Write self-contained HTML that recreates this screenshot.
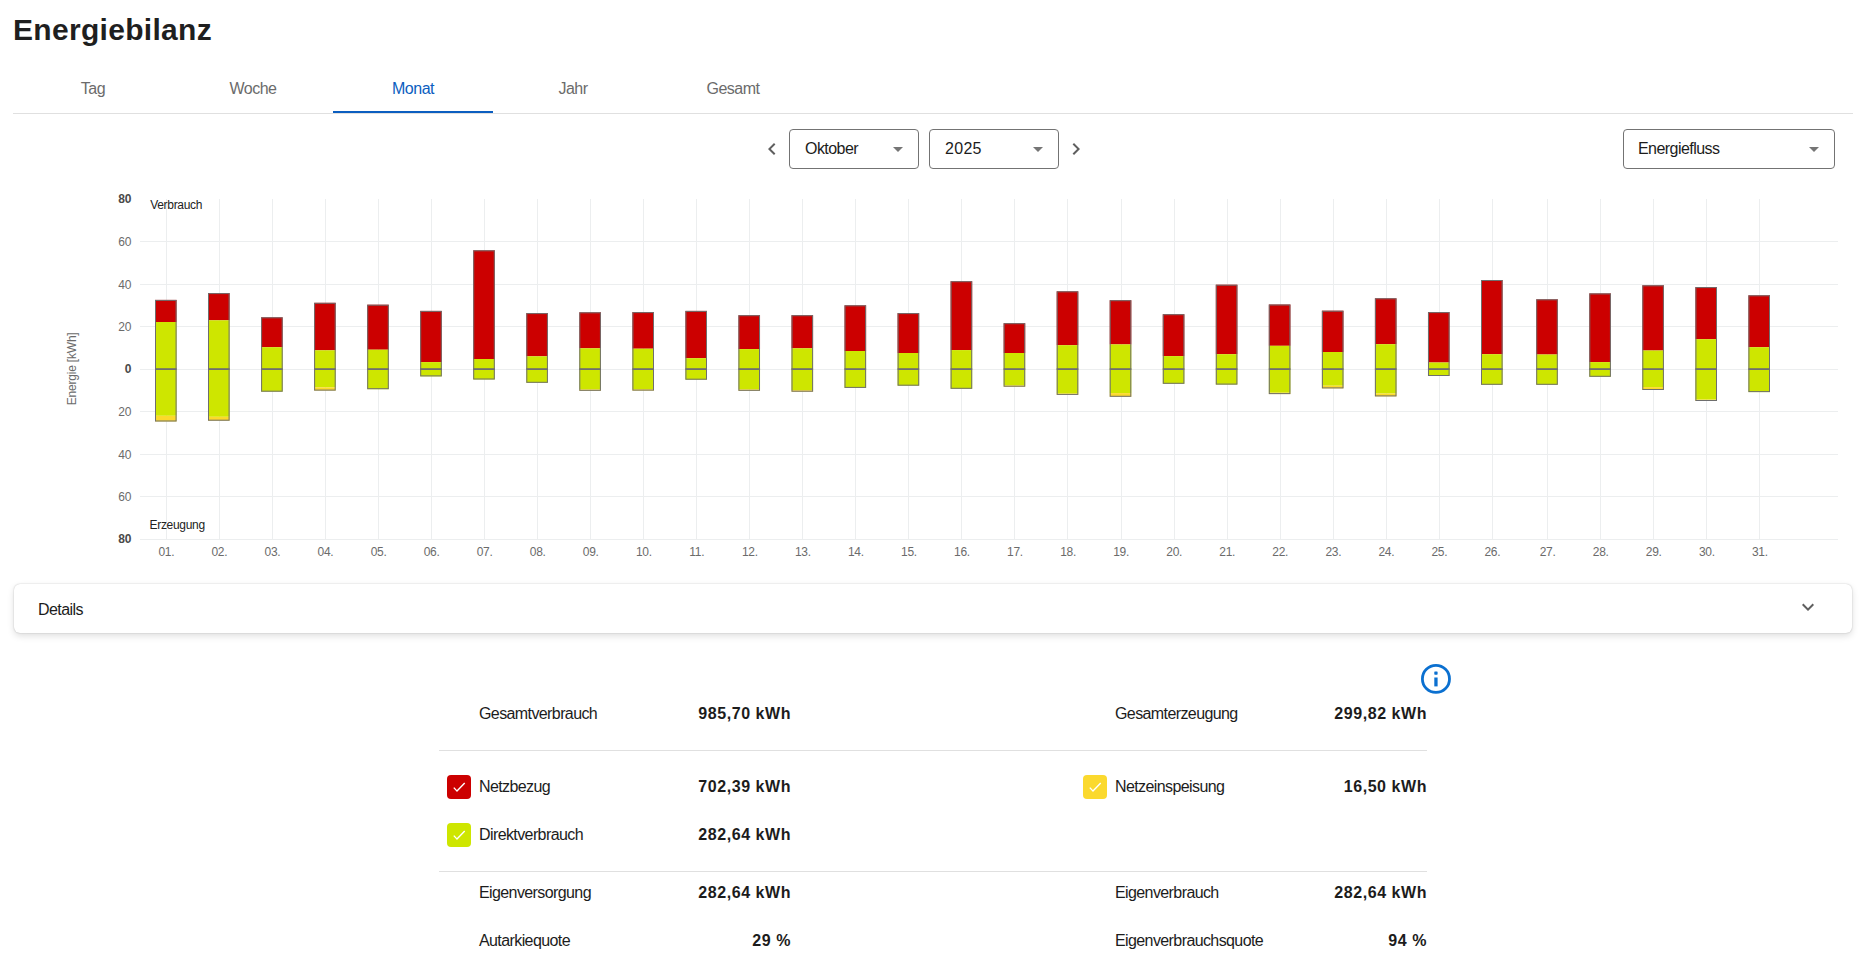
<!DOCTYPE html>
<html lang="de">
<head>
<meta charset="utf-8">
<title>Energiebilanz</title>
<style>
html,body{margin:0;padding:0;background:#fff;}
body{width:1866px;height:978px;position:relative;overflow:hidden;font-family:"Liberation Sans",sans-serif;color:#1c1c1c;}
.a{position:absolute;white-space:nowrap;line-height:1;}
.t16{font-size:16px;letter-spacing:-0.55px;}
.tab{position:absolute;top:81px;width:160px;text-align:center;font-size:16px;line-height:1;color:#6b6b6b;letter-spacing:-0.5px;}
.sel{position:absolute;top:129px;height:40px;box-sizing:border-box;border:1px solid #737373;border-radius:4px;background:#fff;}
.tri{position:absolute;width:0;height:0;border-left:5px solid transparent;border-right:5px solid transparent;border-top:5px solid #757575;}
.lbl{font-size:16px;letter-spacing:-0.6px;color:#1c1c1c;}
.val{font-size:16px;font-weight:bold;letter-spacing:0.55px;color:#1c1c1c;text-align:right;}
.cb{position:absolute;width:24px;height:24px;border-radius:4px;}
.cb svg{position:absolute;left:0;top:0;}
.hr{position:absolute;left:439px;width:988px;height:1px;background:#e0e0e0;}
</style>
</head>
<body>
<div class="a" style="left:13px;top:14.5px;font-size:30px;font-weight:bold;color:#1f1f1f;letter-spacing:0.3px;">Energiebilanz</div>

<div class="tab" style="left:13px;">Tag</div>
<div class="tab" style="left:173px;">Woche</div>
<div class="tab" style="left:333px;color:#0b5ec0;">Monat</div>
<div class="tab" style="left:493px;">Jahr</div>
<div class="tab" style="left:653px;">Gesamt</div>
<div class="a" style="left:13px;top:113px;width:1840px;height:1px;background:#e0e0e0;"></div>
<div class="a" style="left:333px;top:111px;width:160px;height:2px;background:#0b5ec0;"></div>

<svg class="a" style="left:760px;top:137px;" width="24" height="24" viewBox="0 0 24 24"><path d="M15.41 7.41L14 6l-6 6 6 6 1.41-1.41L10.83 12z" fill="#5f5f5f"/></svg>
<div class="sel" style="left:789px;width:130px;"></div>
<div class="a t16" style="left:805px;top:141.4px;">Oktober</div>
<div class="tri" style="left:893px;top:147px;"></div>
<div class="sel" style="left:929px;width:130px;"></div>
<div class="a t16" style="left:945px;top:141.4px;letter-spacing:0.3px;">2025</div>
<div class="tri" style="left:1033px;top:147px;"></div>
<svg class="a" style="left:1064px;top:137px;" width="24" height="24" viewBox="0 0 24 24"><path d="M10 6L8.59 7.41 13.17 12l-4.58 4.59L10 18l6-6z" fill="#5f5f5f"/></svg>
<div class="sel" style="left:1623px;width:212px;"></div>
<div class="a t16" style="left:1638px;top:141.4px;">Energiefluss</div>
<div class="tri" style="left:1809px;top:147px;"></div>

<svg class="a" style="left:0;top:0;" width="1866" height="600" viewBox="0 0 1866 600">
<rect x="140" y="241" width="1698" height="1" fill="#eceeef"/>
<rect x="140" y="284" width="1698" height="1" fill="#eceeef"/>
<rect x="140" y="326" width="1698" height="1" fill="#eceeef"/>
<rect x="140" y="369" width="1698" height="1" fill="#eceeef"/>
<rect x="140" y="411" width="1698" height="1" fill="#eceeef"/>
<rect x="140" y="454" width="1698" height="1" fill="#eceeef"/>
<rect x="140" y="496" width="1698" height="1" fill="#eceeef"/>
<rect x="140" y="539" width="1698" height="1" fill="#eceeef"/>
<rect x="166" y="199" width="1" height="340" fill="#eceeef"/>
<rect x="219" y="199" width="1" height="340" fill="#eceeef"/>
<rect x="272" y="199" width="1" height="340" fill="#eceeef"/>
<rect x="325" y="199" width="1" height="340" fill="#eceeef"/>
<rect x="378" y="199" width="1" height="340" fill="#eceeef"/>
<rect x="431" y="199" width="1" height="340" fill="#eceeef"/>
<rect x="484" y="199" width="1" height="340" fill="#eceeef"/>
<rect x="537" y="199" width="1" height="340" fill="#eceeef"/>
<rect x="590" y="199" width="1" height="340" fill="#eceeef"/>
<rect x="643" y="199" width="1" height="340" fill="#eceeef"/>
<rect x="696" y="199" width="1" height="340" fill="#eceeef"/>
<rect x="749" y="199" width="1" height="340" fill="#eceeef"/>
<rect x="802" y="199" width="1" height="340" fill="#eceeef"/>
<rect x="855" y="199" width="1" height="340" fill="#eceeef"/>
<rect x="908" y="199" width="1" height="340" fill="#eceeef"/>
<rect x="961" y="199" width="1" height="340" fill="#eceeef"/>
<rect x="1014" y="199" width="1" height="340" fill="#eceeef"/>
<rect x="1067" y="199" width="1" height="340" fill="#eceeef"/>
<rect x="1121" y="199" width="1" height="340" fill="#eceeef"/>
<rect x="1174" y="199" width="1" height="340" fill="#eceeef"/>
<rect x="1227" y="199" width="1" height="340" fill="#eceeef"/>
<rect x="1280" y="199" width="1" height="340" fill="#eceeef"/>
<rect x="1333" y="199" width="1" height="340" fill="#eceeef"/>
<rect x="1386" y="199" width="1" height="340" fill="#eceeef"/>
<rect x="1439" y="199" width="1" height="340" fill="#eceeef"/>
<rect x="1492" y="199" width="1" height="340" fill="#eceeef"/>
<rect x="1547" y="199" width="1" height="340" fill="#eceeef"/>
<rect x="1600" y="199" width="1" height="340" fill="#eceeef"/>
<rect x="1653" y="199" width="1" height="340" fill="#eceeef"/>
<rect x="1706" y="199" width="1" height="340" fill="#eceeef"/>
<rect x="1759" y="199" width="1" height="340" fill="#eceeef"/>
<rect x="155.0" y="299.9" width="21.6" height="22.1" fill="#cc0000"/>
<rect x="155.0" y="322.0" width="21.6" height="93.8" fill="#cee600"/>
<rect x="155.0" y="415.8" width="21.6" height="5.7" fill="#fcd92b"/>
<rect x="155.5" y="300.4" width="20.6" height="120.6" fill="none" stroke="#6e6e6e" stroke-width="1"/>
<rect x="155.0" y="368.2" width="21.6" height="1.8" fill="#6e6e6e"/>
<rect x="208.04" y="293.1" width="21.6" height="27.2" fill="#cc0000"/>
<rect x="208.04" y="320.3" width="21.6" height="96.5" fill="#cee600"/>
<rect x="208.04" y="416.8" width="21.6" height="3.9" fill="#fcd92b"/>
<rect x="208.5" y="293.6" width="20.6" height="126.6" fill="none" stroke="#6e6e6e" stroke-width="1"/>
<rect x="208.04" y="368.2" width="21.6" height="1.8" fill="#6e6e6e"/>
<rect x="261.08" y="317.3" width="21.6" height="29.9" fill="#cc0000"/>
<rect x="261.08" y="347.2" width="21.6" height="44.5" fill="#cee600"/>
<rect x="261.6" y="317.8" width="20.6" height="73.4" fill="none" stroke="#6e6e6e" stroke-width="1"/>
<rect x="261.08" y="368.2" width="21.6" height="1.8" fill="#6e6e6e"/>
<rect x="314.12" y="302.8" width="21.6" height="47.5" fill="#cc0000"/>
<rect x="314.12" y="350.3" width="21.6" height="37.0" fill="#cee600"/>
<rect x="314.12" y="387.3" width="21.6" height="3.3" fill="#fcd92b"/>
<rect x="314.6" y="303.3" width="20.6" height="86.8" fill="none" stroke="#6e6e6e" stroke-width="1"/>
<rect x="314.12" y="368.2" width="21.6" height="1.8" fill="#6e6e6e"/>
<rect x="367.16" y="304.7" width="21.6" height="45.0" fill="#cc0000"/>
<rect x="367.16" y="349.7" width="21.6" height="39.5" fill="#cee600"/>
<rect x="367.7" y="305.2" width="20.6" height="83.5" fill="none" stroke="#6e6e6e" stroke-width="1"/>
<rect x="367.16" y="368.2" width="21.6" height="1.8" fill="#6e6e6e"/>
<rect x="420.2" y="310.9" width="21.6" height="51.2" fill="#cc0000"/>
<rect x="420.2" y="362.1" width="21.6" height="14.3" fill="#cee600"/>
<rect x="420.7" y="311.4" width="20.6" height="64.5" fill="none" stroke="#6e6e6e" stroke-width="1"/>
<rect x="420.2" y="368.2" width="21.6" height="1.8" fill="#6e6e6e"/>
<rect x="473.24" y="250.3" width="21.6" height="108.7" fill="#cc0000"/>
<rect x="473.24" y="359.0" width="21.6" height="20.5" fill="#cee600"/>
<rect x="473.7" y="250.8" width="20.6" height="128.2" fill="none" stroke="#6e6e6e" stroke-width="1"/>
<rect x="473.24" y="368.2" width="21.6" height="1.8" fill="#6e6e6e"/>
<rect x="526.28" y="313.1" width="21.6" height="43.2" fill="#cc0000"/>
<rect x="526.28" y="356.3" width="21.6" height="26.5" fill="#cee600"/>
<rect x="526.8" y="313.6" width="20.6" height="68.7" fill="none" stroke="#6e6e6e" stroke-width="1"/>
<rect x="526.28" y="368.2" width="21.6" height="1.8" fill="#6e6e6e"/>
<rect x="579.32" y="312.3" width="21.6" height="36.0" fill="#cc0000"/>
<rect x="579.32" y="348.3" width="21.6" height="41.1" fill="#cee600"/>
<rect x="579.32" y="389.4" width="21.6" height="1.4" fill="#fcd92b"/>
<rect x="579.8" y="312.8" width="20.6" height="77.5" fill="none" stroke="#6e6e6e" stroke-width="1"/>
<rect x="579.32" y="368.2" width="21.6" height="1.8" fill="#6e6e6e"/>
<rect x="632.36" y="312.1" width="21.6" height="36.6" fill="#cc0000"/>
<rect x="632.36" y="348.7" width="21.6" height="40.5" fill="#cee600"/>
<rect x="632.36" y="389.2" width="21.6" height="1.4" fill="#fcd92b"/>
<rect x="632.9" y="312.6" width="20.6" height="77.5" fill="none" stroke="#6e6e6e" stroke-width="1"/>
<rect x="632.36" y="368.2" width="21.6" height="1.8" fill="#6e6e6e"/>
<rect x="685.4" y="310.9" width="21.6" height="47.3" fill="#cc0000"/>
<rect x="685.4" y="358.2" width="21.6" height="21.5" fill="#cee600"/>
<rect x="685.9" y="311.4" width="20.6" height="67.8" fill="none" stroke="#6e6e6e" stroke-width="1"/>
<rect x="685.4" y="368.2" width="21.6" height="1.8" fill="#6e6e6e"/>
<rect x="738.44" y="315.2" width="21.6" height="33.9" fill="#cc0000"/>
<rect x="738.44" y="349.1" width="21.6" height="40.3" fill="#cee600"/>
<rect x="738.44" y="389.4" width="21.6" height="1.4" fill="#fcd92b"/>
<rect x="738.9" y="315.7" width="20.6" height="74.6" fill="none" stroke="#6e6e6e" stroke-width="1"/>
<rect x="738.44" y="368.2" width="21.6" height="1.8" fill="#6e6e6e"/>
<rect x="791.48" y="315.2" width="21.6" height="33.1" fill="#cc0000"/>
<rect x="791.48" y="348.3" width="21.6" height="42.0" fill="#cee600"/>
<rect x="791.48" y="390.3" width="21.6" height="1.4" fill="#fcd92b"/>
<rect x="792.0" y="315.7" width="20.6" height="75.5" fill="none" stroke="#6e6e6e" stroke-width="1"/>
<rect x="791.48" y="368.2" width="21.6" height="1.8" fill="#6e6e6e"/>
<rect x="844.52" y="305.3" width="21.6" height="45.7" fill="#cc0000"/>
<rect x="844.52" y="351.0" width="21.6" height="36.9" fill="#cee600"/>
<rect x="845.0" y="305.8" width="20.6" height="81.6" fill="none" stroke="#6e6e6e" stroke-width="1"/>
<rect x="844.52" y="368.2" width="21.6" height="1.8" fill="#6e6e6e"/>
<rect x="897.56" y="313.1" width="21.6" height="39.9" fill="#cc0000"/>
<rect x="897.56" y="353.0" width="21.6" height="32.7" fill="#cee600"/>
<rect x="898.1" y="313.6" width="20.6" height="71.6" fill="none" stroke="#6e6e6e" stroke-width="1"/>
<rect x="897.56" y="368.2" width="21.6" height="1.8" fill="#6e6e6e"/>
<rect x="950.6" y="281.2" width="21.6" height="68.9" fill="#cc0000"/>
<rect x="950.6" y="350.1" width="21.6" height="38.7" fill="#cee600"/>
<rect x="951.1" y="281.7" width="20.6" height="106.6" fill="none" stroke="#6e6e6e" stroke-width="1"/>
<rect x="950.6" y="368.2" width="21.6" height="1.8" fill="#6e6e6e"/>
<rect x="1003.64" y="323.2" width="21.6" height="29.8" fill="#cc0000"/>
<rect x="1003.64" y="353.0" width="21.6" height="32.5" fill="#cee600"/>
<rect x="1003.64" y="385.5" width="21.6" height="1.2" fill="#fcd92b"/>
<rect x="1004.1" y="323.7" width="20.6" height="62.5" fill="none" stroke="#6e6e6e" stroke-width="1"/>
<rect x="1003.64" y="368.2" width="21.6" height="1.8" fill="#6e6e6e"/>
<rect x="1056.68" y="291.3" width="21.6" height="53.9" fill="#cc0000"/>
<rect x="1056.68" y="345.2" width="21.6" height="48.4" fill="#cee600"/>
<rect x="1056.68" y="393.6" width="21.6" height="1.3" fill="#fcd92b"/>
<rect x="1057.2" y="291.8" width="20.6" height="102.6" fill="none" stroke="#6e6e6e" stroke-width="1"/>
<rect x="1056.68" y="368.2" width="21.6" height="1.8" fill="#6e6e6e"/>
<rect x="1109.72" y="300.2" width="21.6" height="44.2" fill="#cc0000"/>
<rect x="1109.72" y="344.40000000000003" width="21.6" height="48.7" fill="#cee600"/>
<rect x="1109.72" y="393.1" width="21.6" height="3.7" fill="#fcd92b"/>
<rect x="1110.2" y="300.7" width="20.6" height="95.6" fill="none" stroke="#6e6e6e" stroke-width="1"/>
<rect x="1109.72" y="368.2" width="21.6" height="1.8" fill="#6e6e6e"/>
<rect x="1162.76" y="314.2" width="21.6" height="41.9" fill="#cc0000"/>
<rect x="1162.76" y="356.1" width="21.6" height="27.7" fill="#cee600"/>
<rect x="1163.3" y="314.7" width="20.6" height="68.6" fill="none" stroke="#6e6e6e" stroke-width="1"/>
<rect x="1162.76" y="368.2" width="21.6" height="1.8" fill="#6e6e6e"/>
<rect x="1215.8" y="284.7" width="21.6" height="69.5" fill="#cc0000"/>
<rect x="1215.8" y="354.2" width="21.6" height="30.4" fill="#cee600"/>
<rect x="1216.3" y="285.2" width="20.6" height="98.9" fill="none" stroke="#6e6e6e" stroke-width="1"/>
<rect x="1215.8" y="368.2" width="21.6" height="1.8" fill="#6e6e6e"/>
<rect x="1268.84" y="304.5" width="21.6" height="41.3" fill="#cc0000"/>
<rect x="1268.84" y="345.8" width="21.6" height="46.9" fill="#cee600"/>
<rect x="1268.84" y="392.7" width="21.6" height="1.4" fill="#fcd92b"/>
<rect x="1269.3" y="305.0" width="20.6" height="88.6" fill="none" stroke="#6e6e6e" stroke-width="1"/>
<rect x="1268.84" y="368.2" width="21.6" height="1.8" fill="#6e6e6e"/>
<rect x="1321.88" y="310.7" width="21.6" height="41.3" fill="#cc0000"/>
<rect x="1321.88" y="352.0" width="21.6" height="33.7" fill="#cee600"/>
<rect x="1321.88" y="385.7" width="21.6" height="2.7" fill="#fcd92b"/>
<rect x="1322.4" y="311.2" width="20.6" height="76.7" fill="none" stroke="#6e6e6e" stroke-width="1"/>
<rect x="1321.88" y="368.2" width="21.6" height="1.8" fill="#6e6e6e"/>
<rect x="1374.92" y="298.3" width="21.6" height="45.9" fill="#cc0000"/>
<rect x="1374.92" y="344.2" width="21.6" height="49.3" fill="#cee600"/>
<rect x="1374.92" y="393.5" width="21.6" height="2.9" fill="#fcd92b"/>
<rect x="1375.4" y="298.8" width="20.6" height="97.1" fill="none" stroke="#6e6e6e" stroke-width="1"/>
<rect x="1374.92" y="368.2" width="21.6" height="1.8" fill="#6e6e6e"/>
<rect x="1427.96" y="312.1" width="21.6" height="50.4" fill="#cc0000"/>
<rect x="1427.96" y="362.5" width="21.6" height="13.5" fill="#cee600"/>
<rect x="1428.5" y="312.6" width="20.6" height="62.9" fill="none" stroke="#6e6e6e" stroke-width="1"/>
<rect x="1427.96" y="368.2" width="21.6" height="1.8" fill="#6e6e6e"/>
<rect x="1481.0" y="280.0" width="21.6" height="74.2" fill="#cc0000"/>
<rect x="1481.0" y="354.2" width="21.6" height="30.6" fill="#cee600"/>
<rect x="1481.5" y="280.5" width="20.6" height="103.8" fill="none" stroke="#6e6e6e" stroke-width="1"/>
<rect x="1481.0" y="368.2" width="21.6" height="1.8" fill="#6e6e6e"/>
<rect x="1536.24" y="299.3" width="21.6" height="55.2" fill="#cc0000"/>
<rect x="1536.24" y="354.5" width="21.6" height="30.3" fill="#cee600"/>
<rect x="1536.7" y="299.8" width="20.6" height="84.5" fill="none" stroke="#6e6e6e" stroke-width="1"/>
<rect x="1536.24" y="368.2" width="21.6" height="1.8" fill="#6e6e6e"/>
<rect x="1589.28" y="293.4" width="21.6" height="68.7" fill="#cc0000"/>
<rect x="1589.28" y="362.1" width="21.6" height="14.7" fill="#cee600"/>
<rect x="1589.8" y="293.9" width="20.6" height="82.4" fill="none" stroke="#6e6e6e" stroke-width="1"/>
<rect x="1589.28" y="368.2" width="21.6" height="1.8" fill="#6e6e6e"/>
<rect x="1642.32" y="285.3" width="21.6" height="65.2" fill="#cc0000"/>
<rect x="1642.32" y="350.5" width="21.6" height="36.6" fill="#cee600"/>
<rect x="1642.32" y="387.1" width="21.6" height="2.9" fill="#fcd92b"/>
<rect x="1642.8" y="285.8" width="20.6" height="103.7" fill="none" stroke="#6e6e6e" stroke-width="1"/>
<rect x="1642.32" y="368.2" width="21.6" height="1.8" fill="#6e6e6e"/>
<rect x="1695.36" y="287.1" width="21.6" height="52.1" fill="#cc0000"/>
<rect x="1695.36" y="339.2" width="21.6" height="60.4" fill="#cee600"/>
<rect x="1695.36" y="399.6" width="21.6" height="1.4" fill="#fcd92b"/>
<rect x="1695.9" y="287.6" width="20.6" height="112.9" fill="none" stroke="#6e6e6e" stroke-width="1"/>
<rect x="1695.36" y="368.2" width="21.6" height="1.8" fill="#6e6e6e"/>
<rect x="1748.4" y="295.3" width="21.6" height="51.9" fill="#cc0000"/>
<rect x="1748.4" y="347.2" width="21.6" height="44.9" fill="#cee600"/>
<rect x="1748.9" y="295.8" width="20.6" height="95.8" fill="none" stroke="#6e6e6e" stroke-width="1"/>
<rect x="1748.4" y="368.2" width="21.6" height="1.8" fill="#6e6e6e"/>
<g font-family="Liberation Sans" font-size="12" fill="#6b6b6b" text-anchor="end">
<text x="131.5" y="203.2" font-weight="bold" fill="#4a4a4a">80</text>
<text x="131.5" y="246.2">60</text>
<text x="131.5" y="288.6">40</text>
<text x="131.5" y="331">20</text>
<text x="131.5" y="373.2" font-weight="bold" fill="#4a4a4a">0</text>
<text x="131.5" y="416">20</text>
<text x="131.5" y="458.5">40</text>
<text x="131.5" y="501">60</text>
<text x="131.5" y="543.2" font-weight="bold" fill="#4a4a4a">80</text>
</g>
<g font-family="Liberation Sans" font-size="12" fill="#222">
<text x="150.2" y="209.3" letter-spacing="-0.3">Verbrauch</text>
<text x="149.5" y="529" letter-spacing="-0.3">Erzeugung</text>
</g>
<g font-family="Liberation Sans" font-size="12" fill="#6b6b6b" letter-spacing="-0.3">
<text x="166.4" y="555.7" text-anchor="middle">01.</text>
<text x="219.4" y="555.7" text-anchor="middle">02.</text>
<text x="272.5" y="555.7" text-anchor="middle">03.</text>
<text x="325.5" y="555.7" text-anchor="middle">04.</text>
<text x="378.6" y="555.7" text-anchor="middle">05.</text>
<text x="431.6" y="555.7" text-anchor="middle">06.</text>
<text x="484.6" y="555.7" text-anchor="middle">07.</text>
<text x="537.7" y="555.7" text-anchor="middle">08.</text>
<text x="590.7" y="555.7" text-anchor="middle">09.</text>
<text x="643.8" y="555.7" text-anchor="middle">10.</text>
<text x="696.8" y="555.7" text-anchor="middle">11.</text>
<text x="749.8" y="555.7" text-anchor="middle">12.</text>
<text x="802.9" y="555.7" text-anchor="middle">13.</text>
<text x="855.9" y="555.7" text-anchor="middle">14.</text>
<text x="909.0" y="555.7" text-anchor="middle">15.</text>
<text x="962.0" y="555.7" text-anchor="middle">16.</text>
<text x="1015.0" y="555.7" text-anchor="middle">17.</text>
<text x="1068.1" y="555.7" text-anchor="middle">18.</text>
<text x="1121.1" y="555.7" text-anchor="middle">19.</text>
<text x="1174.2" y="555.7" text-anchor="middle">20.</text>
<text x="1227.2" y="555.7" text-anchor="middle">21.</text>
<text x="1280.2" y="555.7" text-anchor="middle">22.</text>
<text x="1333.3" y="555.7" text-anchor="middle">23.</text>
<text x="1386.3" y="555.7" text-anchor="middle">24.</text>
<text x="1439.4" y="555.7" text-anchor="middle">25.</text>
<text x="1492.4" y="555.7" text-anchor="middle">26.</text>
<text x="1547.6" y="555.7" text-anchor="middle">27.</text>
<text x="1600.7" y="555.7" text-anchor="middle">28.</text>
<text x="1653.7" y="555.7" text-anchor="middle">29.</text>
<text x="1706.8" y="555.7" text-anchor="middle">30.</text>
<text x="1759.8" y="555.7" text-anchor="middle">31.</text>
</g>
<text transform="translate(75.5 368.9) rotate(-90)" text-anchor="middle" font-family="Liberation Sans" font-size="12" fill="#6b6b6b" letter-spacing="-0.2">Energie [kWh]</text>
</svg>

<div class="a" style="left:14px;top:584px;width:1838px;height:49px;border-radius:6px;background:#fff;box-shadow:0 0 1.5px rgba(0,0,0,0.25),0 3px 7px rgba(0,0,0,0.13);"></div>
<div class="a t16" style="left:38px;top:601.5px;">Details</div>
<svg class="a" style="left:1796px;top:595px;" width="24" height="24" viewBox="0 0 24 24"><path d="M16.59 8.59L12 13.17 7.41 8.59 6 10l6 6 6-6z" fill="#5f5f5f"/></svg>

<svg class="a" style="left:1418px;top:661px;" width="36" height="36" viewBox="0 0 36 36"><circle cx="17.95" cy="17.9" r="13.55" fill="none" stroke="#0b70d0" stroke-width="2.8"/><rect x="16.3" y="16.5" width="3.3" height="8.9" fill="#0b70d0"/><rect x="16.3" y="10.4" width="3.3" height="3.3" rx="0.6" fill="#0b70d0"/></svg>

<div class="a lbl" style="left:479px;top:706px;">Gesamtverbrauch</div>
<div class="a val" style="left:640px;width:151px;top:706px;">985,70 kWh</div>
<div class="a lbl" style="left:1115px;top:706px;">Gesamterzeugung</div>
<div class="a val" style="left:1276px;width:151px;top:706px;">299,82 kWh</div>
<div class="hr" style="top:750px;"></div>

<div class="cb" style="left:447px;top:775px;background:#cc0000;"><svg width="24" height="24" viewBox="0 0 24 24"><path d="M6.8 12.6L10 16.1L17.7 8.1" fill="none" stroke="#fff" stroke-width="1.4"/></svg></div>
<div class="a lbl" style="left:479px;top:779.3px;">Netzbezug</div>
<div class="a val" style="left:640px;width:151px;top:779.3px;">702,39 kWh</div>
<div class="cb" style="left:1083px;top:775px;background:#fbd92e;"><svg width="24" height="24" viewBox="0 0 24 24"><path d="M6.8 12.6L10 16.1L17.7 8.1" fill="none" stroke="#fff" stroke-width="1.4"/></svg></div>
<div class="a lbl" style="left:1115px;top:779.3px;">Netzeinspeisung</div>
<div class="a val" style="left:1276px;width:151px;top:779.3px;">16,50 kWh</div>

<div class="cb" style="left:447px;top:823px;background:#cee600;"><svg width="24" height="24" viewBox="0 0 24 24"><path d="M6.8 12.6L10 16.1L17.7 8.1" fill="none" stroke="#fff" stroke-width="1.4"/></svg></div>
<div class="a lbl" style="left:479px;top:827px;">Direktverbrauch</div>
<div class="a val" style="left:640px;width:151px;top:827px;">282,64 kWh</div>
<div class="hr" style="top:871px;"></div>

<div class="a lbl" style="left:479px;top:884.7px;">Eigenversorgung</div>
<div class="a val" style="left:640px;width:151px;top:884.7px;">282,64 kWh</div>
<div class="a lbl" style="left:1115px;top:884.7px;">Eigenverbrauch</div>
<div class="a val" style="left:1276px;width:151px;top:884.7px;">282,64 kWh</div>

<div class="a lbl" style="left:479px;top:932.5px;">Autarkiequote</div>
<div class="a val" style="left:640px;width:151px;top:932.5px;">29 %</div>
<div class="a lbl" style="left:1115px;top:932.5px;">Eigenverbrauchsquote</div>
<div class="a val" style="left:1276px;width:151px;top:932.5px;">94 %</div>
</body>
</html>
